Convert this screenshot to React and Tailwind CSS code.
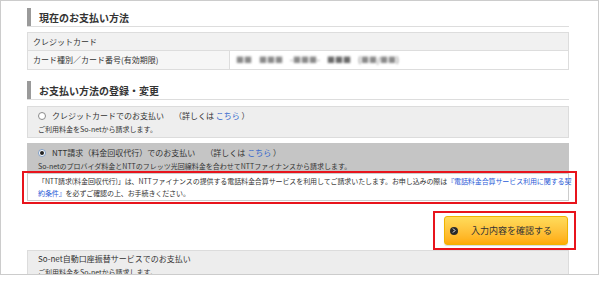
import React from 'react';

const FONT = { fontFamily: '"Noto Sans CJK JP", "Noto Sans", sans-serif' };

const Heading = ({ children }) => (
    <div className="border-b border-[#dddddd]">
        <div className="h-[18px] border-l-4 border-[#9a9a9a] pl-[8px] flex items-center text-[10px] font-bold text-[#333]">
            {children}
        </div>
    </div>
);

const Radio = ({ checked }) =>
    checked ? (
        <span className="w-[8px] h-[8px] rounded-full border border-[#7d9cc4] bg-white flex items-center justify-center shrink-0">
            <span className="w-[4px] h-[4px] rounded-full bg-[#222]" />
        </span>
    ) : (
        <span className="w-[8px] h-[8px] rounded-full border border-[#8a8a8a] bg-white shrink-0" />
    );

const Detail = () => (
    <span className="ml-[10px]">
        （詳しくは <a className="text-[#3366cc]">こちら</a> ）
    </span>
);

export default function App() {
    return (
        <div className="w-[600px] h-[302px] bg-white text-[#333]" style={FONT}>
            <div className="w-[599px] h-[275px] border border-[#cccccc] overflow-hidden">
                <div className="ml-[26px] w-[542px] pt-[7px]">
                    {/* 現在のお支払い方法 */}
                    <Heading>現在のお支払い方法</Heading>

                    <div className="mt-[5px] border border-[#dddddd] text-[8px]">
                        <div className="h-[18px] bg-[#f1f1f1] border-b border-[#dddddd] flex items-center pl-[5px]">
                            クレジットカード
                        </div>
                        <div className="h-[18px] flex">
                            <div className="w-[202px] bg-[#f6f6f6] border-r border-[#dddddd] flex items-center pl-[5px]">
                                カード種別／カード番号(有効期限)
                            </div>
                            <div className="flex-1 flex items-center pl-[6px] text-[#8a8a8a] blur-[1px] gap-[7px] font-bold">
                                <span>■■</span>
                                <span>■■■</span>
                                <span>-■■■-</span>
                                <span className="text-[#6a6a6a]">■■■</span>
                                <span>(■■/■■)</span>
                            </div>
                        </div>
                    </div>

                    {/* お支払い方法の登録・変更 */}
                    <div className="mt-[11px]">
                        <Heading>お支払い方法の登録・変更</Heading>
                    </div>

                    <div className="mt-[6px] h-[32px] bg-[#eeeeee] border border-[#dcdcdc] pl-[10px] pt-[3px]">
                        <div className="flex items-center h-[12px] text-[8px] leading-[12px]">
                            <Radio />
                            <span className="ml-[6px]">クレジットカードでのお支払い</span>
                            <Detail />
                        </div>
                        <div className="mt-[2px] text-[7px] leading-[10px]">ご利用料金をSo-netから請求します。</div>
                    </div>

                    <div className="mt-[5px] h-[28px] bg-[#c5c5c5] pl-[11px] pt-[4px]">
                        <div className="flex items-center h-[12px] text-[8px] leading-[12px]">
                            <Radio checked />
                            <span className="ml-[6px]">NTT請求（料金回収代行）でのお支払い</span>
                            <Detail />
                        </div>
                        <div className="mt-[2px] text-[7px] leading-[10px]">
                            So-netのプロバイダ料金とNTTのフレッツ光回線料金を合わせてNTTファイナンスから請求します。
                        </div>
                    </div>

                    <div className="relative mt-[2px]">
                        <div className="h-[28px] border border-[#cccccc] bg-white pl-[10px] pt-[1px] text-[7px] leading-[12px] whitespace-nowrap tracking-[-0.1px]">
                            「NTT請求(料金回収代行)」は、NTTファイナンスの提供する電話料金合算サービスを利用してご請求いたします。お申し込みの際は
                            <a className="text-[#2a5bd7]">『電話料金合算サービス利用に関する契</a>
                            <br />
                            <a className="text-[#2a5bd7]">約条件』</a>を必ずご確認の上、お手続きください。
                        </div>
                        <div className="absolute -top-[2px] -bottom-[3px] -left-[5px] -right-[8px] border-2 border-[#e8141c] pointer-events-none" />
                    </div>

                    <div className="mt-[15px] flex justify-end pr-[1px]">
                        <div className="relative">
                            <button className="w-[124px] h-[29px] rounded-[3px] border border-[#f0b400] bg-gradient-to-b from-[#ffdc5a] to-[#ffab00] shadow-[0_1px_1px_rgba(0,0,0,0.15)] flex items-center pl-[5px]">
                                <span className="w-[8px] h-[8px] rounded-full bg-[#2a2a2a] flex items-center justify-center">
                                    <svg width="4" height="5" viewBox="0 0 4 5">
                                        <path d="M1 0.5 L3 2.5 L1 4.5" stroke="#fff" strokeWidth="1" fill="none" />
                                    </svg>
                                </span>
                                <span className="ml-[13px] text-[9px] text-[#333]">入力内容を確認する</span>
                            </button>
                            <div className="absolute -top-[5px] -bottom-[5px] -left-[11px] -right-[8px] border-2 border-[#e8141c] pointer-events-none" />
                        </div>
                    </div>

                    <div className="mt-[5px] h-[40px] bg-[#ededed] border border-[#dcdcdc] pl-[10px] pt-[2px]">
                        <div className="text-[8px] leading-[12px]">So-net自動口座振替サービスでのお支払い</div>
                        <div className="mt-[2px] text-[7px] leading-[10px]">ご利用料金をSo-netから請求します。</div>
                    </div>
                </div>
            </div>
        </div>
    );
}
